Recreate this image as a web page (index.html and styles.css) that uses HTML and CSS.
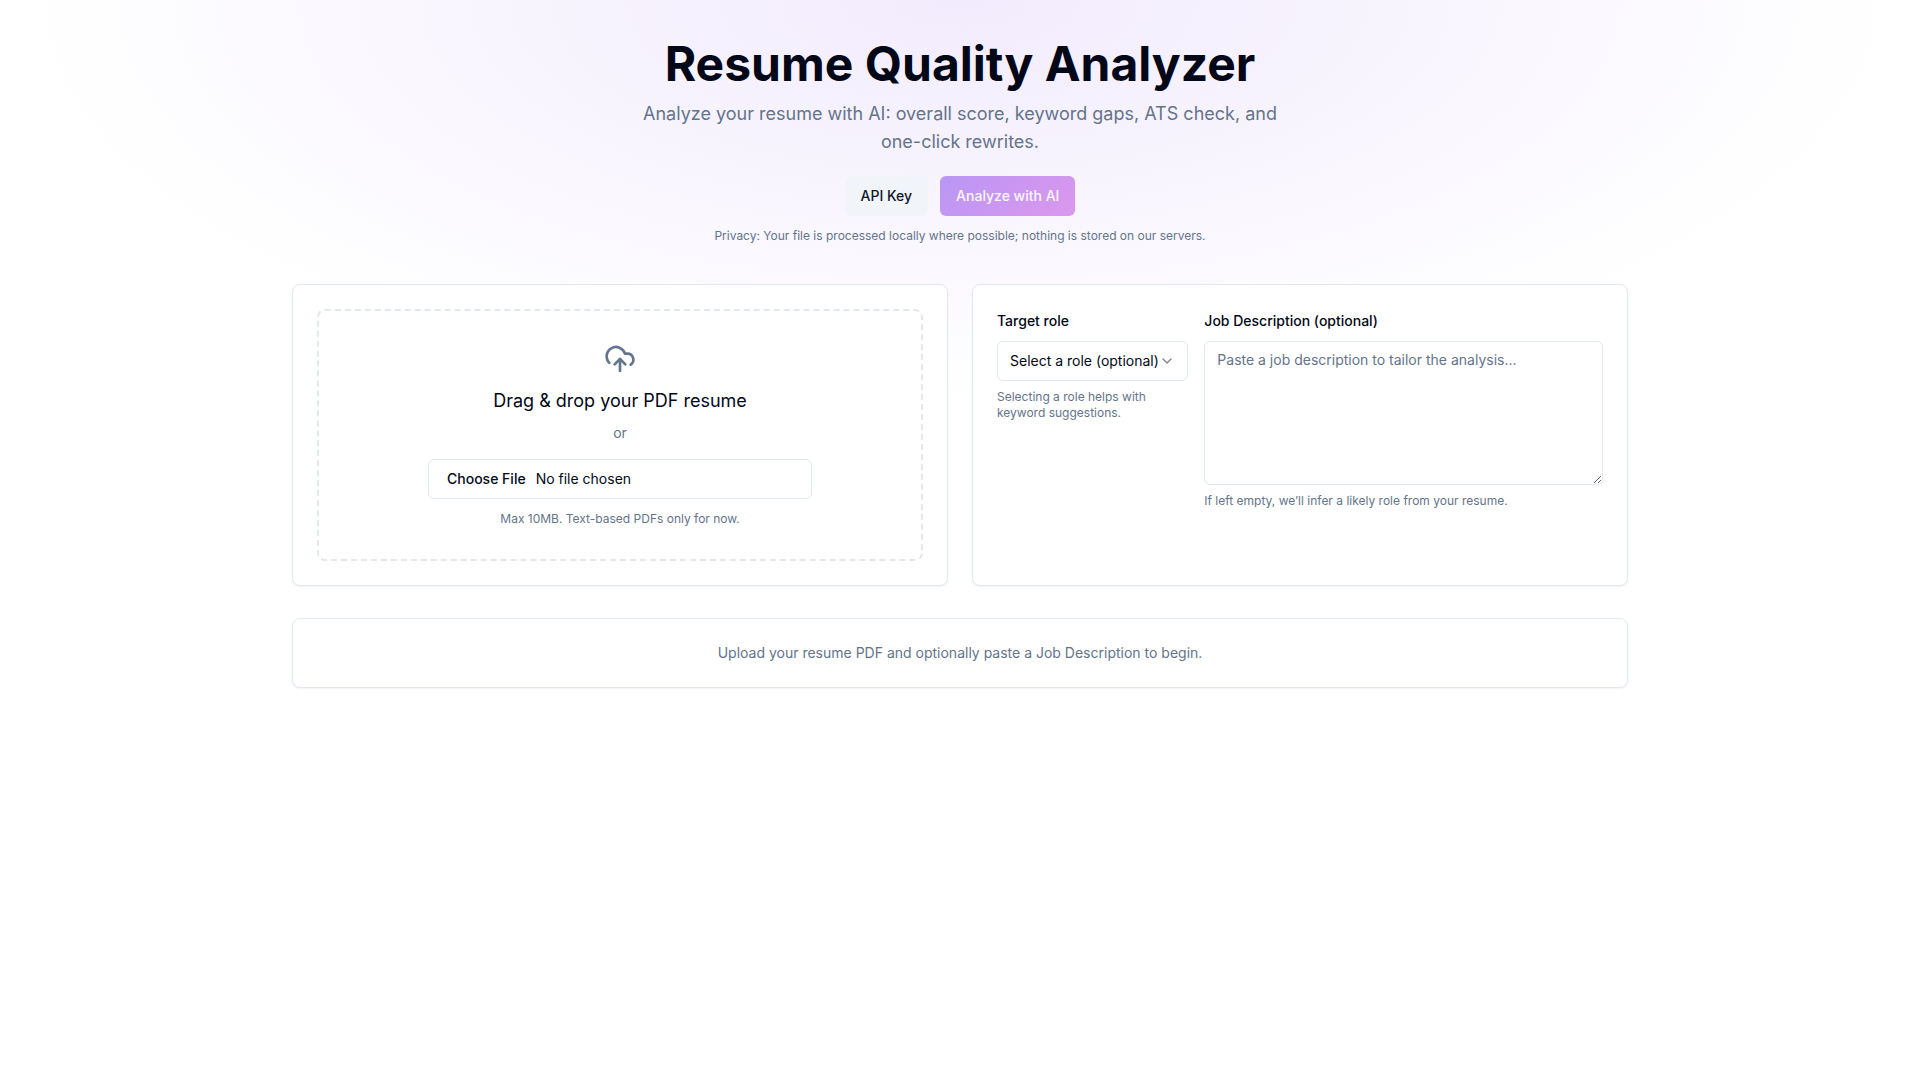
FILE: index.html
```
<!DOCTYPE html>
<html lang="en">
<head>
  <meta charset="UTF-8">
  <meta name="viewport" content="width=device-width, initial-scale=1.0">
  <title>Resume Quality Analyzer</title>
  <link rel="stylesheet" href="styles.css">
</head>
<body>
  <div class="container">
    <header class="hero">
      <h1>Resume Quality Analyzer</h1>
      <p class="lead">Analyze your resume with AI: overall score, keyword gaps, ATS check, and one-click rewrites.</p>
      <div class="actions">
        <button class="btn btn-secondary" type="button">API Key</button>
        <button class="btn btn-hero" type="button" disabled>Analyze with AI</button>
      </div>
      <p class="hint">Privacy: Your file is processed locally where possible; nothing is stored on our servers.</p>
    </header>

    <main class="sections">
      <div class="panels">
        <section class="card">
          <div class="dropzone">
            <svg class="upload-icon" viewBox="0 0 24 24" fill="none" stroke="currentColor" stroke-width="2" stroke-linecap="round" stroke-linejoin="round" aria-hidden="true">
              <path d="M4 14.899A7 7 0 1 1 15.71 8h1.79a4.5 4.5 0 0 1 2.5 8.242"/>
              <path d="M12 12v9"/>
              <path d="m16 16-4-4-4 4"/>
            </svg>
            <label class="drop-title" for="resume">Drag &amp; drop your PDF resume</label>
            <p class="drop-or">or</p>
            <input class="control file-input" id="resume" type="file" accept="application/pdf">
            <p class="hint">Max 10MB. Text-based PDFs only for now.</p>
          </div>
        </section>

        <section class="card">
          <div class="fields">
            <div class="field">
              <label for="role">Target role</label>
              <div class="select-wrap">
                <select class="control" id="role">
                  <option>Select a role (optional)</option>
                </select>
                <svg class="chevron" viewBox="0 0 24 24" fill="none" stroke="currentColor" stroke-width="2" stroke-linecap="round" stroke-linejoin="round" aria-hidden="true">
                  <path d="m6 9 6 6 6-6"/>
                </svg>
              </div>
              <p class="hint">Selecting a role helps with keyword suggestions.</p>
            </div>
            <div class="field">
              <label for="jd">Job Description (optional)</label>
              <textarea class="control" id="jd" placeholder="Paste a job description to tailor the analysis..."></textarea>
              <p class="hint">If left empty, we’ll infer a likely role from your resume.</p>
            </div>
          </div>
        </section>
      </div>

      <section class="card empty">
        <p>Upload your resume PDF and optionally paste a Job Description to begin.</p>
      </section>
    </main>
  </div>
</body>
</html>
```
FILE: styles.css
```
:root {
  --foreground: #020817;
  --muted: #64748b;
  --border: #e2e8f0;
  --secondary: #f1f5f9;
  --primary: #7c3bed;
  --accent: #c03cdd;
}

* {
  box-sizing: border-box;
}

body {
  margin: 0;
  min-height: 100vh;
  font-family: Inter, sans-serif;
  font-size: 16px;
  line-height: 24px;
  color: var(--foreground);
  background: radial-gradient(940px 400px at 50% 0, rgba(124, 59, 237, 0.1), transparent) #fff;
}

h1,
p {
  margin: 0;
}

.container {
  max-width: 1400px;
  margin: 0 auto;
  padding: 40px 32px;
}

/* Hero */
.hero {
  display: flex;
  flex-direction: column;
  align-items: center;
  margin-bottom: 40px;
  text-align: center;
}

.hero h1 {
  font-size: 48px;
  line-height: 48px;
  font-weight: 700;
}

.lead {
  max-width: 672px;
  margin-top: 12px;
  font-size: 18px;
  line-height: 28px;
  color: var(--muted);
}

.actions {
  display: flex;
  gap: 12px;
  margin: 20px 0 12px;
}

.btn {
  height: 40px;
  padding: 0 16px;
  border: none;
  border-radius: 6px;
  font-family: inherit;
  font-size: 14px;
  line-height: 20px;
  font-weight: 500;
  cursor: pointer;
}

.btn-secondary {
  background: var(--secondary);
  color: #0f172a;
}

.btn-hero {
  background: linear-gradient(135deg, var(--primary), var(--accent));
  color: #f8fafc;
}

.btn:disabled {
  opacity: 0.5;
  cursor: default;
}

.hint {
  font-size: 12px;
  line-height: 16px;
  color: var(--muted);
}

/* Cards */
.sections {
  display: grid;
  gap: 32px;
}

.panels {
  display: grid;
  grid-template-columns: repeat(2, minmax(0, 1fr));
  gap: 24px;
}

.card {
  padding: 24px;
  border: 1px solid var(--border);
  border-radius: 8px;
  background: #fff;
  box-shadow: 0 1px 2px rgba(0, 0, 0, 0.05);
}

.control {
  display: block;
  width: 100%;
  height: 40px;
  padding: 8px 12px;
  border: 1px solid var(--border);
  border-radius: 6px;
  background: #fff;
  font-family: inherit;
  font-size: 14px;
  line-height: 20px;
  color: var(--foreground);
}

/* Upload */
.dropzone {
  display: flex;
  flex-direction: column;
  align-items: center;
  padding: 32px;
  border: 2px dashed var(--border);
  border-radius: 8px;
  text-align: center;
}

.upload-icon {
  width: 32px;
  height: 32px;
  margin-bottom: 12px;
  color: var(--muted);
}

.drop-title {
  font-size: 18px;
  line-height: 28px;
}

.drop-or {
  margin: 8px 0 16px;
  font-size: 14px;
  line-height: 20px;
  color: var(--muted);
}

.file-input {
  max-width: 384px;
  margin-bottom: 12px;
}

.file-input::file-selector-button {
  border: 0;
  background: transparent;
  font-family: inherit;
  font-size: 14px;
  line-height: 20px;
  font-weight: 500;
  color: var(--foreground);
}

/* Role and job description */
.fields {
  display: grid;
  grid-template-columns: repeat(3, minmax(0, 1fr));
  gap: 16px;
}

.field:last-child {
  grid-column: span 2;
}

.field label {
  display: block;
  margin-bottom: 8px;
  font-size: 14px;
  font-weight: 500;
}

.field .hint {
  margin-top: 8px;
}

.select-wrap {
  position: relative;
}

.select-wrap select {
  appearance: none;
}

.chevron {
  position: absolute;
  top: 12px;
  right: 13px;
  width: 16px;
  height: 16px;
  opacity: 0.5;
  pointer-events: none;
}

.field textarea {
  height: 144px;
  resize: vertical;
}

.field textarea::placeholder {
  color: var(--muted);
}

.empty {
  font-size: 14px;
  line-height: 20px;
  text-align: center;
  color: var(--muted);
}

@media (max-width: 1000px) {
  .panels {
    grid-template-columns: minmax(0, 1fr);
  }
}
```
